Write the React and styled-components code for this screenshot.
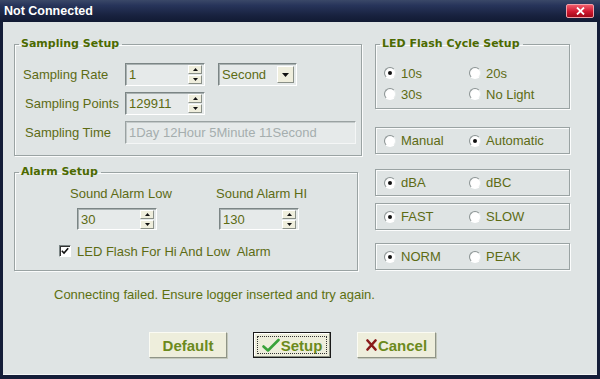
import React from "react";
import styled, { createGlobalStyle } from "styled-components";

const Global = createGlobalStyle`
  html, body { margin: 0; padding: 0; background: #0f1830; }
  body { font-family: "Liberation Sans", Arial, sans-serif; }
  * { box-sizing: border-box; }
`;

const Win = styled.div`
  width: 600px;
  height: 379px;
  display: flex;
  flex-direction: column;
  background: #141d38;
  padding: 0 3px 4px 3px;
`;

const TitleBar = styled.div`
  height: 22px;
  margin: 0 -3px;
  padding: 0 6px 0 4px;
  display: flex;
  align-items: center;
  justify-content: space-between;
  background: linear-gradient(#3a4868 0%, #27345a 25%, #18223f 70%, #111a33 100%);
`;

const TitleText = styled.span`
  color: #fff;
  font: bold 12.5px "Liberation Sans", Arial, sans-serif;
`;

const CloseBtn = styled.div`
  width: 28px;
  height: 14px;
  border-radius: 2px;
  border: 1px solid #f0a0a8;
  background: linear-gradient(#f05a6a, #d01830 55%, #a00818);
  display: flex;
  align-items: center;
  justify-content: center;
`;

const Body = styled.div`
  flex: 1;
  background: #dfe4e4;
  border-bottom: 1px solid #f4f6f6;
  padding: 15px 0 0 11px;
  display: flex;
  flex-direction: column;
`;

const Top = styled.div`
  display: flex;
  gap: 13px;
  align-items: flex-start;
`;

const Col = styled.div`
  display: flex;
  flex-direction: column;
  width: ${(p) => p.$w}px;
`;

const Group = styled.fieldset`
  margin: ${(p) => p.$mt || 0}px 0 0 0;
  min-width: 0;
  width: ${(p) => p.$w}px;
  padding: ${(p) => p.$pad};
  border: 1px solid #9aa3a3;
  box-shadow: 1px 1px 0 #fbfcfc, inset 1px 1px 0 #fbfcfc;
`;

const Legend = styled.legend`
  padding: 0 3px 0 2px;
  margin-left: ${(p) => p.$ml}px;
  height: 14px;
  line-height: 14px;
  font: bold 11px "DejaVu Sans", Verdana, sans-serif;
  color: #4c6a00;
`;

const FormGrid = styled.div`
  display: grid;
  grid-template-columns: 102px auto;
  row-gap: 6px;
  align-items: center;
`;

const Label = styled.span`
  font-size: 13px;
  line-height: 16px;
  color: #5d6b14;
  white-space: nowrap;
  padding-left: ${(p) => p.$indent || 0}px;
`;

const RowLine = styled.div`
  display: flex;
  align-items: center;
  gap: 13px;
`;

const Sunken = styled.div`
  width: ${(p) => p.$w}px;
  height: ${(p) => p.$h || 23}px;
  border: 1px solid;
  border-color: ${(p) => (p.$disabled ? "#9aa2a2 #f4f6f6 #f4f6f6 #9aa2a2" : "#7b8585 #ffffff #ffffff #7b8585")};
  box-shadow: inset 1px 1px 0 ${(p) => (p.$disabled ? "#c4caca" : "#a9b1b1")};
  background: #e6eaea;
  display: flex;
  align-items: center;
  padding: 0 2px 0 3px;
  font-size: 13px;
  color: ${(p) => (p.$disabled ? "#a5aeae" : "#5d6b14")};
  margin-left: ${(p) => p.$ml || 0}px;
`;

const Value = styled.span`
  flex: 1;
  white-space: nowrap;
  overflow: hidden;
`;

const Spin = styled.div`
  display: flex;
  flex-direction: column;
  gap: 1px;
`;

const SpinBtn = styled.div`
  width: 14px;
  height: 9px;
  background: #efeedd;
  border: 1px solid;
  border-color: #ffffff #8a9088 #8a9088 #ffffff;
  display: flex;
  align-items: center;
  justify-content: center;
`;

const Arrow = ({ up, size = 2 }) => (
  <svg width={size * 2 + 1} height={size + 1} viewBox={`0 0 ${size * 2 + 1} ${size + 1}`}>
    <polygon
      points={up ? `0,${size + 1} ${size * 2 + 1},${size + 1} ${size + 0.5},0` : `0,0 ${size * 2 + 1},0 ${size + 0.5},${size + 1}`}
      fill="#111"
    />
  </svg>
);

const SpinBox = ({ value, w = 80, h = 23, ml }) => (
  <Sunken $w={w} $h={h} $ml={ml}>
    <Value>{value}</Value>
    <Spin>
      <SpinBtn><Arrow up size={2} /></SpinBtn>
      <SpinBtn><Arrow size={2} /></SpinBtn>
    </Spin>
  </Sunken>
);

const DropBtn = styled.div`
  width: 17px;
  height: 17px;
  background: #efeedd;
  border: 1px solid;
  border-color: #ffffff #8a9088 #8a9088 #ffffff;
  display: flex;
  align-items: center;
  justify-content: center;
`;

const RadioGrid = styled.div`
  display: grid;
  grid-template-columns: 85px auto;
  row-gap: ${(p) => p.$gap || 0}px;
`;

const RadioItem = styled.div`
  display: flex;
  align-items: center;
  gap: 5px;
  height: 16px;
  font-size: 13px;
  color: #5d6b14;
  white-space: nowrap;
`;

const Circle = styled.span`
  width: 12px;
  height: 12px;
  border-radius: 50%;
  background: radial-gradient(circle at 60% 60%, #ffffff 55%, #e4e8e8 100%);
  border: 1px solid;
  border-color: #8c9494 #e8ecec #ffffff #8c9494;
  display: flex;
  align-items: center;
  justify-content: center;
  flex: none;
  &::after {
    content: "";
    width: 4px;
    height: 4px;
    border-radius: 50%;
    background: ${(p) => (p.$on ? "#111" : "transparent")};
  }
`;

const Radio = ({ on, children }) => (
  <RadioItem>
    <Circle $on={on} />
    <span>{children}</span>
  </RadioItem>
);

const Box = styled.div`
  width: 195px;
  height: ${(p) => p.$h}px;
  margin-top: ${(p) => p.$mt}px;
  border: 1px solid #9aa3a3;
  box-shadow: 1px 1px 0 #fbfcfc, inset 1px 1px 0 #fbfcfc;
  display: flex;
  align-items: center;
  padding-left: 8px;
`;

const AlarmCols = styled.div`
  display: flex;
  padding-left: 55px;
`;

const AlarmCol = styled.div`
  display: flex;
  flex-direction: column;
  align-items: flex-start;
  gap: 6px;
  width: ${(p) => p.$w}px;
`;

const CheckRow = styled.div`
  display: flex;
  align-items: center;
  gap: 6px;
  margin: 13px 0 0 44px;
  font-size: 13px;
  color: #5d6b14;
  height: 16px;
`;

const CheckBox = styled.span`
  width: 12px;
  height: 12px;
  background: #fff;
  border: 1px solid;
  border-color: #7b8585 #ffffff #ffffff #7b8585;
  box-shadow: inset 1px 1px 0 #333;
  display: flex;
  align-items: center;
  justify-content: center;
`;

const Message = styled.div`
  margin: 16px 0 0 40px;
  font-size: 13px;
  line-height: 16px;
  color: #5d7010;
`;

const ButtonRow = styled.div`
  display: flex;
  gap: 26px;
  margin: 29px 0 0 135px;
`;

const Btn = styled.div`
  width: ${(p) => p.$w}px;
  height: 26px;
  display: flex;
  align-items: center;
  justify-content: center;
  gap: 1px;
  background: #eeeedc;
  border: 1px solid;
  border-color: ${(p) => (p.$focus ? "#1a1a1a" : "#fbfbf3 #8f9487 #8f9487 #fbfbf3")};
  box-shadow: ${(p) => (p.$focus ? "inset -1px -1px 0 #8f9487, inset 1px 1px 0 #fff" : "1px 1px 0 #c4c8bc")};
  font: bold 15px "Liberation Sans", Arial, sans-serif;
  color: #6c8a1c;
  position: relative;
  &::after {
    content: "";
    display: ${(p) => (p.$focus ? "block" : "none")};
    position: absolute;
    inset: 3px;
    border: 1px dotted #333;
  }
`;

export default function App() {
  return (
    <>
      <Global />
      <Win>
        <TitleBar>
          <TitleText>Not Connected</TitleText>
          <CloseBtn>
            <svg width="9" height="8" viewBox="0 0 9 8">
              <path d="M1 0.5 L8 7.5 M8 0.5 L1 7.5" stroke="#fff" strokeWidth="1.8" />
            </svg>
          </CloseBtn>
        </TitleBar>
        <Body>
          <Top>
            <Col $w={348}>
              <Group $w={348} $pad="12px 7px 11px 8px">
                <Legend $ml={-4}>Sampling Setup</Legend>
                <FormGrid>
                  <Label>Sampling Rate</Label>
                  <RowLine>
                    <SpinBox value="1" />
                    <Sunken $w={79} $h={23}>
                      <Value>Second</Value>
                      <DropBtn>
                        <Arrow size={3} />
                      </DropBtn>
                    </Sunken>
                  </RowLine>
                  <Label $indent={2}>Sampling Points</Label>
                  <SpinBox value="129911" />
                  <Label $indent={2}>Sampling Time</Label>
                  <Sunken $w={231} $h={23} $disabled>
                    <Value>1Day 12Hour 5Minute 11Second</Value>
                  </Sunken>
                </FormGrid>
              </Group>
              <Group $w={344} $mt={9} $pad="7px 0 11px 0">
                <Legend $ml={4}>Alarm Setup</Legend>
                <AlarmCols>
                  <AlarmCol $w={146}>
                    <Label>Sound Alarm Low</Label>
                    <SpinBox value="30" h={22} ml={7} />
                  </AlarmCol>
                  <AlarmCol $w={120}>
                    <Label>Sound Alarm HI</Label>
                    <SpinBox value="130" h={22} ml={3} />
                  </AlarmCol>
                </AlarmCols>
                <CheckRow>
                  <CheckBox>
                    <svg width="8" height="8" viewBox="0 0 8 8">
                      <path d="M0.8 3.8 L3 6 L7.2 1.2" stroke="#111" strokeWidth="1.6" fill="none" />
                    </svg>
                  </CheckBox>
                  <span>LED Flash For Hi And Low&nbsp; Alarm</span>
                </CheckRow>
              </Group>
            </Col>
            <Col $w={195}>
              <Group $w={195} $pad="14px 0 6px 8px">
                <Legend $ml={-4}>LED Flash Cycle Setup</Legend>
                <RadioGrid $gap={5}>
                  <Radio on>10s</Radio>
                  <Radio>20s</Radio>
                  <Radio>30s</Radio>
                  <Radio>No Light</Radio>
                </RadioGrid>
              </Group>
              <Box $h={27} $mt={18}>
                <RadioGrid>
                  <Radio>Manual</Radio>
                  <Radio on>Automatic</Radio>
                </RadioGrid>
              </Box>
              <Box $h={27} $mt={15}>
                <RadioGrid>
                  <Radio on>dBA</Radio>
                  <Radio>dBC</Radio>
                </RadioGrid>
              </Box>
              <Box $h={27} $mt={7}>
                <RadioGrid>
                  <Radio on>FAST</Radio>
                  <Radio>SLOW</Radio>
                </RadioGrid>
              </Box>
              <Box $h={27} $mt={13}>
                <RadioGrid>
                  <Radio on>NORM</Radio>
                  <Radio>PEAK</Radio>
                </RadioGrid>
              </Box>
            </Col>
          </Top>
          <Message>Connecting failed. Ensure logger inserted and try again.</Message>
          <ButtonRow>
            <Btn $w={78}>Default</Btn>
            <Btn $w={78} $focus>
              <svg width="18" height="14" viewBox="0 0 18 14">
                <path d="M1.5 8.5 L6 12.5 L16.5 2" stroke="#3aa33a" strokeWidth="2.6" fill="none" strokeLinecap="round" strokeLinejoin="round" />
              </svg>
              Setup
            </Btn>
            <Btn $w={79}>
              <svg width="11" height="12" viewBox="0 0 11 12">
                <path d="M1.5 1.5 L9.5 10.5 M9.5 1.5 L1.5 10.5" stroke="#8a1a1a" strokeWidth="2.6" strokeLinecap="round" />
              </svg>
              Cancel
            </Btn>
          </ButtonRow>
        </Body>
      </Win>
    </>
  );
}
